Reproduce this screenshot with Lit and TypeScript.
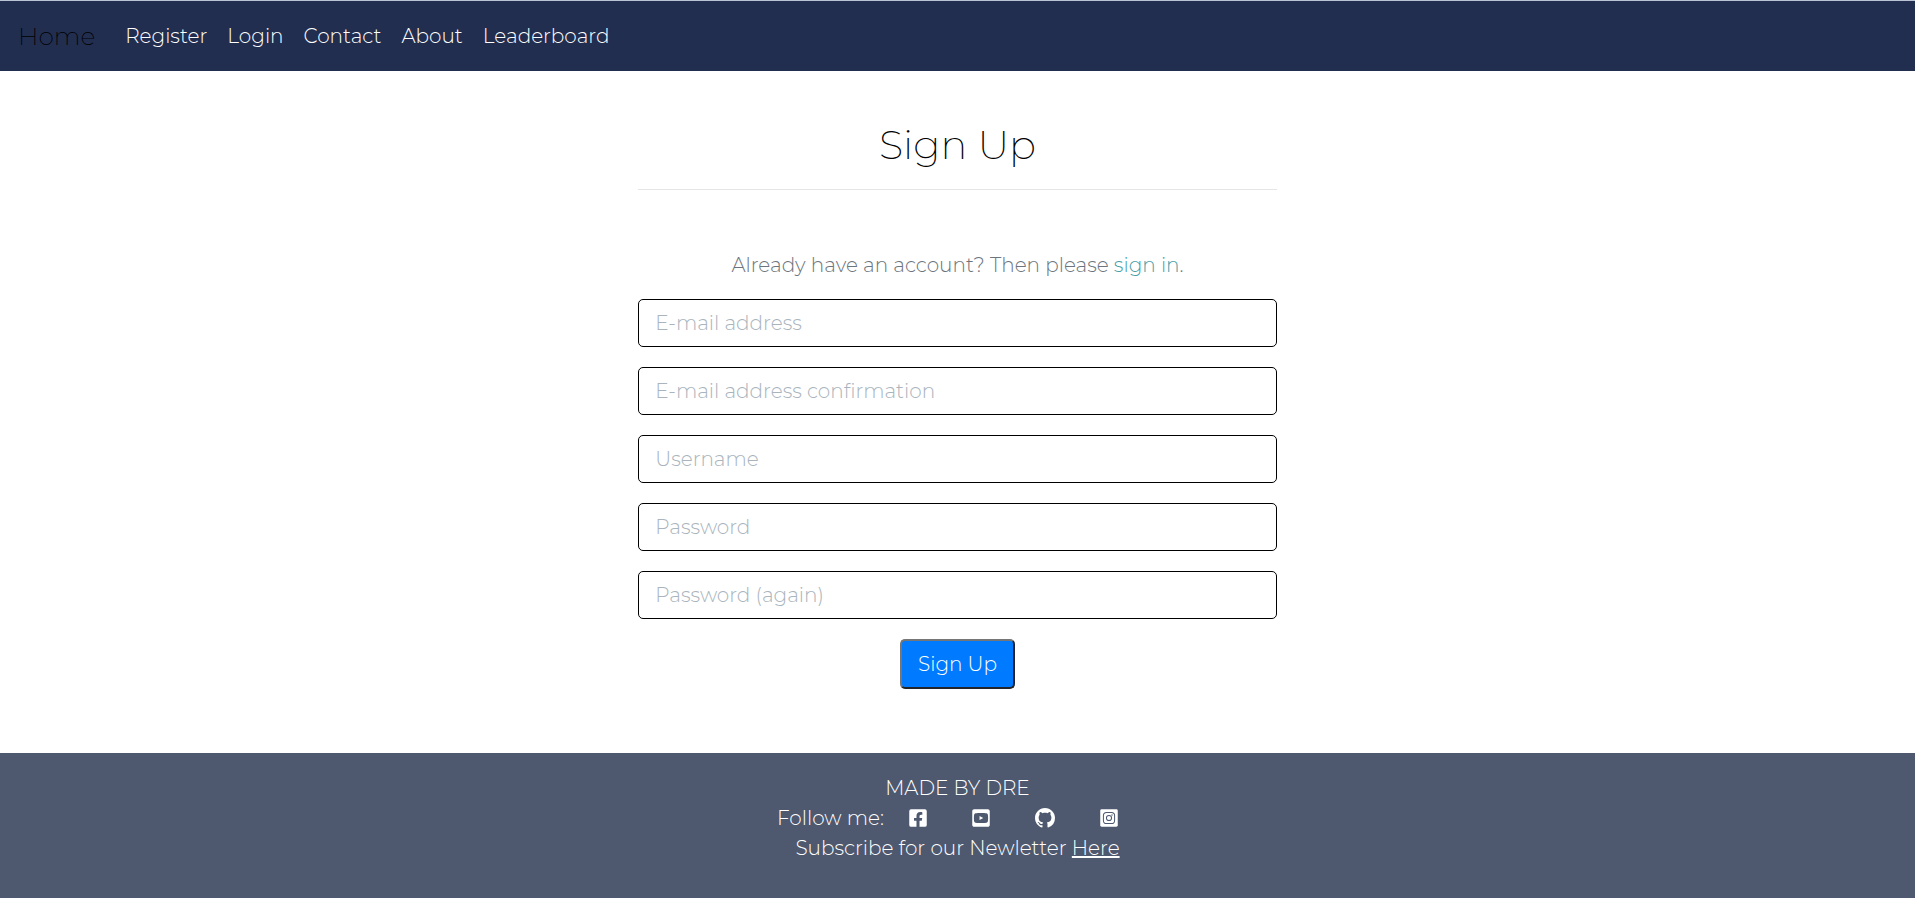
import { LitElement, html, css, svg } from "lit";
import { customElement } from "lit/decorators.js";

const NAV_LINKS = ["Register", "Login", "Contact", "About", "Leaderboard"];

const FIELDS = [
  { name: "email", type: "email", label: "E-mail address" },
  { name: "email2", type: "email", label: "E-mail address confirmation" },
  { name: "username", type: "text", label: "Username" },
  { name: "password1", type: "password", label: "Password" },
  { name: "password2", type: "password", label: "Password (again)" },
];

const SOCIAL = [
  {
    label: "Facebook",
    box: "0 0 448 512",
    wide: false,
    art: svg`<path d="M400 32H48A48 48 0 0 0 0 80v352a48 48 0 0 0 48 48h137.25V327.69h-63V256h63v-54.64c0-62.15 37-96.48 93.67-96.48 27.14 0 55.52 4.84 55.52 4.84v61h-31.27c-30.81 0-40.42 19.12-40.42 38.73V256h68.78l-11 71.69h-57.78V480H400a48 48 0 0 0 48-48V80a48 48 0 0 0-48-48z"/>`,
  },
  {
    label: "YouTube",
    box: "0 0 448 512",
    wide: false,
    art: svg`<path d="M186.8 202.1l95.2 54.1-95.2 54.1V202.1zM448 80v352c0 26.5-21.5 48-48 48H48c-26.5 0-48-21.5-48-48V80c0-26.5 21.5-48 48-48h352c26.5 0 48 21.5 48 48zm-42 176.3s0-59.6-7.6-88.2c-4.2-15.8-16.5-28.2-32.2-32.4C337.9 128 224 128 224 128s-113.9 0-142.2 7.7c-15.7 4.2-28 16.6-32.2 32.4-7.6 28.5-7.6 88.2-7.6 88.2s0 59.6 7.6 88.2c4.2 15.8 16.5 27.7 32.2 31.9C110.1 384 224 384 224 384s113.9 0 142.2-7.7c15.7-4.2 28-16.1 32.2-31.9 7.6-28.5 7.6-88.1 7.6-88.1z"/>`,
  },
  {
    label: "GitHub",
    box: "0 0 16 16",
    wide: true,
    art: svg`<path d="M8 0C3.58 0 0 3.58 0 8c0 3.54 2.29 6.53 5.47 7.59.4.07.55-.17.55-.38 0-.19-.01-.82-.01-1.49-2.01.37-2.53-.49-2.69-.94-.09-.23-.48-.94-.82-1.13-.28-.15-.68-.52-.01-.53.63-.01 1.08.58 1.23.82.72 1.21 1.87.87 2.33.66.07-.52.28-.87.51-1.07-1.78-.2-3.64-.89-3.64-3.95 0-.87.31-1.59.82-2.15-.08-.2-.36-1.02.08-2.12 0 0 .67-.21 2.2.82.64-.18 1.32-.27 2-.27s1.36.09 2 .27c1.53-1.04 2.2-.82 2.2-.82.44 1.1.16 1.92.08 2.12.51.56.82 1.27.82 2.15 0 3.07-1.87 3.75-3.65 3.95.29.25.54.73.54 1.48 0 1.07-.01 1.93-.01 2.2 0 .21.15.46.55.38A8.01 8.01 0 0 0 16 8c0-4.42-3.58-8-8-8z"/>`,
  },
  {
    label: "Instagram",
    box: "0 0 448 512",
    wide: false,
    art: svg`<rect y="32" width="448" height="448" rx="36"/>
      <rect class="cut" x="81" y="113" width="286" height="286" rx="80"/>
      <circle class="cut" cx="224" cy="256" r="66"/>
      <circle class="dot" cx="301" cy="180" r="18"/>`,
  },
];

@customElement("app-root")
export class AppRoot extends LitElement {
  static styles = css`
    :host {
      display: flex;
      flex-direction: column;
      min-height: 100vh;
      background: #fff;
      color: #000;
      font-family: Montserrat, Inter, sans-serif;
      font-size: 20px;
      font-weight: 300;
      line-height: 30px;
    }
    *,
    *::before,
    *::after {
      box-sizing: border-box;
    }
    .nav {
      display: flex;
      align-items: center;
      gap: 20px;
      padding: 10px 18px;
      border-top: 1px solid #b9c3d4;
      background: #222e50;
    }
    .brand {
      color: #000;
      font-size: 25px;
      font-weight: 200;
      line-height: 50px;
      text-decoration: none;
    }
    .links {
      display: flex;
      flex-wrap: wrap;
      margin: 0;
      padding: 0;
      list-style: none;
    }
    .link {
      display: block;
      padding: 10px;
      color: #fff;
      text-decoration: none;
    }
    .main {
      width: 100%;
      padding: 50px 20px 64px;
    }
    .panel {
      width: 100%;
      max-width: calc(100vw / 3);
      min-width: min(100%, 480px);
      margin: 0 auto;
      text-align: center;
    }
    .title {
      margin: 0;
      padding-bottom: 20px;
      border-bottom: 1px solid #e5e5e5;
      font-size: 40px;
      font-weight: 200;
      line-height: 48px;
    }
    .intro {
      margin: 60px 0 19px;
      color: #6c757d;
    }
    .signin {
      color: #4a9fa8;
      text-decoration: none;
    }
    .form {
      display: grid;
      gap: 20px;
      justify-items: center;
    }
    .field {
      width: 100%;
      height: 48px;
      padding: 8px 16px;
      border: 1px solid #000;
      border-radius: 5px;
      background: #fff;
      color: #495057;
      font: inherit;
    }
    .field::placeholder {
      color: #a9b4bd;
      opacity: 1;
    }
    .submit {
      height: 50px;
      padding: 8px 16px;
      border: 2px solid;
      border-color: #767676 #212529 #212529 #767676;
      border-radius: 5px;
      background: #007bff;
      color: #fff;
      font: inherit;
    }
    .footer {
      flex: 1;
      padding: 20px 20px 35px;
      background: #4e586e;
      color: #fff;
      text-align: center;
    }
    .line {
      margin: 0;
    }
    .follow {
      display: flex;
      justify-content: center;
      gap: 5px;
    }
    .social {
      display: flex;
      align-items: center;
      padding: 0 20px;
    }
    .icon {
      width: 18px;
      height: 20px;
      fill: #fff;
    }
    .icon.wide {
      width: 20px;
    }
    .cut {
      fill: none;
      stroke: #4e586e;
      stroke-width: 26;
    }
    .dot {
      fill: #4e586e;
    }
    .here {
      color: #fff;
      text-decoration: underline;
    }
  `;

  render() {
    return html`
      <nav class="nav">
        <a class="brand" href="#">Home</a>
        <ul class="links">
          ${NAV_LINKS.map((t) => html`<li><a class="link" href="#">${t}</a></li>`)}
        </ul>
      </nav>
      <main class="main">
        <div class="panel">
          <h1 class="title">Sign Up</h1>
          <p class="intro">
            Already have an account? Then please <a class="signin" href="#">sign in</a>.
          </p>
          <form class="form">
            ${FIELDS.map(
              (f) => html`<input
                class="field"
                type=${f.type}
                name=${f.name}
                placeholder=${f.label}
                aria-label=${f.label}
              />`
            )}
            <button class="submit" type="button">Sign Up</button>
          </form>
        </div>
      </main>
      <footer class="footer">
        <p class="line">MADE BY DRE</p>
        <div class="follow">
          <span>Follow me:</span>
          ${SOCIAL.map(
            (s) => html`<a class="social" href="#" aria-label=${s.label}>
              <svg class="icon ${s.wide ? "wide" : ""}" viewBox=${s.box} aria-hidden="true">${s.art}</svg>
            </a>`
          )}
        </div>
        <p class="line">Subscribe for our Newletter <a class="here" href="#">Here</a></p>
      </footer>
    `;
  }
}
